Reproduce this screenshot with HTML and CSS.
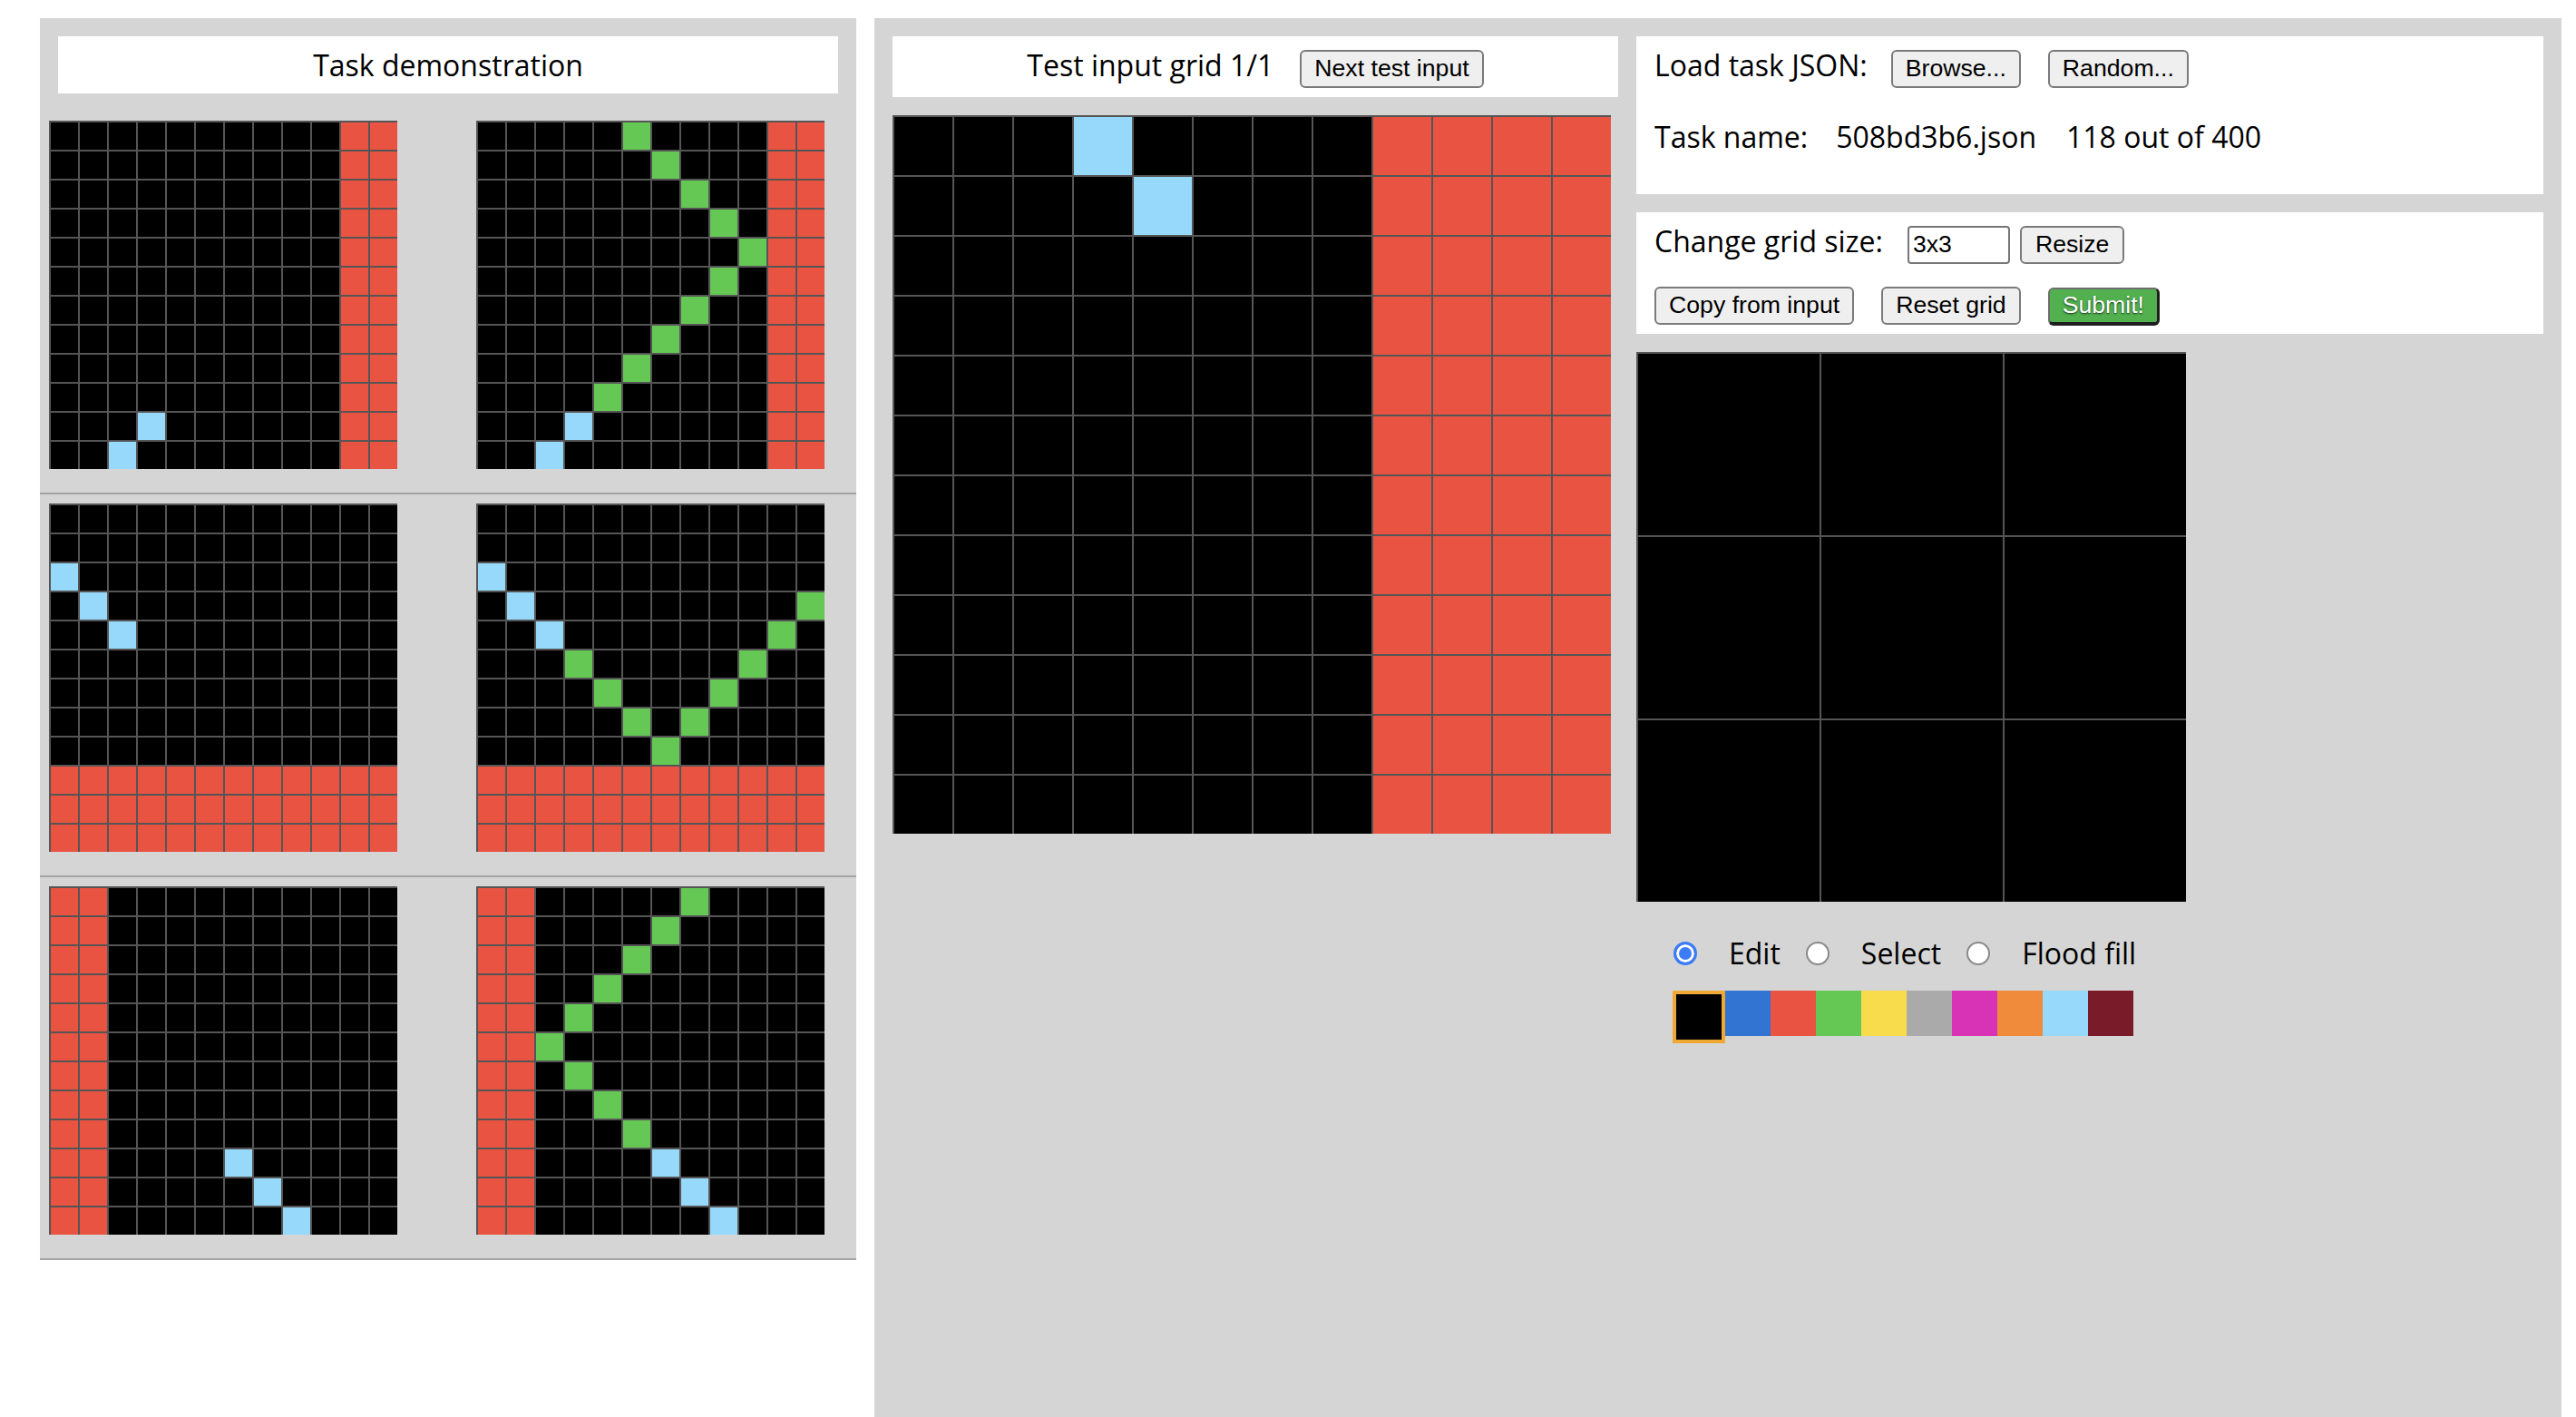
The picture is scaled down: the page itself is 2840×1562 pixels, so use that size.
FILE: index.html
```html
<!DOCTYPE html>
<html lang="en">
<head>
<meta charset="utf-8">
<title>ARC testing interface</title>
<link rel="stylesheet" href="styles.css">
</head>
<body>
<div class="workspace">
  <section class="demo-panel">
    <div class="demo-title">Task demonstration</div>
    <div class="pair">
      <div class="grid g12 demo-grid" data-rows="000000000022,000000000022,000000000022,000000000022,000000000022,000000000022,000000000022,000000000022,000000000022,000000000022,000800000022,008000000022"></div>
      <div class="grid g12 demo-grid" data-rows="000003000022,000000300022,000000030022,000000003022,000000000322,000000003022,000000030022,000000300022,000003000022,000030000022,000800000022,008000000022"></div>
    </div>
    <div class="pair">
      <div class="grid g12 demo-grid" data-rows="000000000000,000000000000,800000000000,080000000000,008000000000,000000000000,000000000000,000000000000,000000000000,222222222222,222222222222,222222222222"></div>
      <div class="grid g12 demo-grid" data-rows="000000000000,000000000000,800000000000,080000000003,008000000030,000300000300,000030003000,000003030000,000000300000,222222222222,222222222222,222222222222"></div>
    </div>
    <div class="pair">
      <div class="grid g12 demo-grid" data-rows="220000000000,220000000000,220000000000,220000000000,220000000000,220000000000,220000000000,220000000000,220000000000,220000800000,220000080000,220000008000"></div>
      <div class="grid g12 demo-grid" data-rows="220000030000,220000300000,220003000000,220030000000,220300000000,223000000000,220300000000,220030000000,220003000000,220000800000,220000080000,220000008000"></div>
    </div>
  </section>

  <section class="eval-area">
    <div class="test-col">
      <div class="test-title">
        <span class="label">Test input grid 1/1</span>
        <button class="btn btn-next">Next test input</button>
      </div>
      <div class="grid g12 test-grid" data-rows="000800002222,000080002222,000000002222,000000002222,000000002222,000000002222,000000002222,000000002222,000000002222,000000002222,000000002222,000000002222"></div>
    </div>

    <div class="control-col">
      <div class="box box-load">
        <div class="row">
          <span class="label">Load task JSON:</span>
          <button class="btn btn-browse">Browse...</button>
          <button class="btn btn-random">Random...</button>
        </div>
        <div class="row row-name">
          <span class="label">Task name:</span>
          <span class="label task-file">508bd3b6.json</span>
          <span class="label task-count">118 out of 400</span>
        </div>
      </div>

      <div class="box box-edit">
        <div class="row">
          <span class="label">Change grid size:</span>
          <input class="size-input" type="text" value="3x3">
          <button class="btn btn-resize">Resize</button>
        </div>
        <div class="row row-actions">
          <button class="btn">Copy from input</button>
          <button class="btn btn-gap">Reset grid</button>
          <button class="btn btn-gap btn-submit">Submit!</button>
        </div>
      </div>

      <div class="grid g3 output-grid" data-rows="000,000,000"></div>

      <div class="tools">
        <input class="radio" type="radio" name="tool" id="tool_edit" checked>
        <label class="tool-label" for="tool_edit">Edit</label>
        <input class="radio" type="radio" name="tool" id="tool_select">
        <label class="tool-label" for="tool_select">Select</label>
        <input class="radio" type="radio" name="tool" id="tool_fill">
        <label class="tool-label" for="tool_fill">Flood fill</label>
      </div>

      <div class="palette">
        <div class="swatch c0 selected"></div>
        <div class="swatch c1"></div>
        <div class="swatch c2"></div>
        <div class="swatch c3"></div>
        <div class="swatch c4"></div>
        <div class="swatch c5"></div>
        <div class="swatch c6"></div>
        <div class="swatch c7"></div>
        <div class="swatch c8"></div>
        <div class="swatch c9"></div>
      </div>
    </div>
  </section>
</div>
<script src="script.js"></script>
</body>
</html>
```

FILE: styles.css
```css
html, body {
  margin: 0;
  padding: 0;
  background: #ffffff;
  font-family: "Open Sans", "Liberation Sans", sans-serif;
  color: #000;
}

.workspace {
  display: flex;
  align-items: flex-start;
  padding: 20px 0 0 44px;
  height: 100vh;
  box-sizing: border-box;
}

/* ---------- left: demonstration ---------- */
.demo-panel {
  width: 900px;
  flex: none;
  background: #d5d5d5;
  padding-top: 20px;
}

.demo-title {
  height: 63px;
  box-sizing: border-box;
  margin: 0 20px;
  padding-top: 10px;
  background: #fff;
  text-align: center;
  font-size: 32px;
}

.pair {
  display: flex;
  gap: 87px;
  padding: 10px 0 26px 10px;
  border-bottom: 2px solid #a4a4a4;
}

.pair:first-of-type,
.demo-title + .pair {
  margin-top: 20px;
}

/* ---------- grids ---------- */
.grid {
  display: grid;
  flex: none;
}

.g12 {
  grid-template-columns: repeat(12, 1fr);
  grid-template-rows: repeat(12, 1fr);
}

.g3 {
  grid-template-columns: repeat(3, 1fr);
  grid-template-rows: repeat(3, 1fr);
}

.demo-grid {
  width: 384px;
  height: 384px;
}

.test-grid {
  width: 792px;
  height: 792px;
  margin-top: 20px;
}

.output-grid {
  width: 606px;
  height: 606px;
  margin-top: 20px;
}

.cell {
  box-sizing: border-box;
  border-top: 2px solid #555;
  border-left: 2px solid #555;
}

.c0 { background: #000000; }
.c1 { background: #3274d2; }
.c2 { background: #e95342; }
.c3 { background: #65c855; }
.c4 { background: #f9dc4b; }
.c5 { background: #aaaaaa; }
.c6 { background: #d833b6; }
.c7 { background: #ef8b3b; }
.c8 { background: #96d9fa; }
.c9 { background: #7a1b2a; }

/* ---------- right: evaluation area ---------- */
.eval-area {
  flex: none;
  width: 1860px;
  height: calc(100vh - 20px);
  margin-left: 20px;
  box-sizing: border-box;
  background: #d5d5d5;
  padding: 20px;
  display: flex;
  align-items: flex-start;
  gap: 20px;
}

.test-col {
  width: 800px;
  flex: none;
}

.test-title {
  height: 67px;
  box-sizing: border-box;
  padding-top: 10px;
  background: #fff;
  display: flex;
  align-items: baseline;
  justify-content: center;
  gap: 29px;
}

.label {
  font-size: 32px;
  white-space: nowrap;
}

.control-col {
  width: 1000px;
  flex: none;
}

.box {
  background: #fff;
  box-sizing: border-box;
  padding: 10px 20px 0 20px;
}

.box-load {
  height: 174px;
}

.box-edit {
  height: 134px;
  margin-top: 20px;
}

.row {
  display: flex;
  align-items: baseline;
}

.row-name {
  margin-top: 32px;
}

.task-file {
  margin-left: 31px;
}

.task-count {
  margin-left: 33px;
}

.row-actions {
  margin-top: 25px;
}

/* ---------- buttons / inputs ---------- */
.btn {
  height: 42px;
  box-sizing: border-box;
  padding: 0 14px;
  margin: 0;
  border: 2px solid #7a7a7a;
  border-radius: 6px;
  background: #efefef;
  color: #000;
  font-family: "Liberation Sans", Arial, sans-serif;
  font-size: 26.67px;
  white-space: nowrap;
}

.btn-browse {
  margin-left: 26px;
}

.btn-random {
  margin-left: 30px;
}

.btn-resize {
  margin-left: 11px;
  padding: 0 15px;
}

.btn-gap {
  margin-left: 30px;
}

.btn-submit {
  background: #52b04f;
  color: #fff;
  border-width: 2px 3px 4px 2px;
  border-color: #6e6e6e #1e1e1e #1e1e1e #6e6e6e;
  text-shadow: 0 1px 2px rgba(0, 0, 0, 0.75);
}

.size-input {
  width: 113px;
  height: 42px;
  box-sizing: border-box;
  margin: 0 0 0 27px;
  padding: 0 4px;
  border: 2px solid #767676;
  border-radius: 4px;
  background: #fff;
  color: #000;
  font-family: "Liberation Sans", Arial, sans-serif;
  font-size: 26.67px;
}

/* ---------- tools ---------- */
.tools {
  display: flex;
  align-items: center;
  margin: 35px 0 0 41px;
}

.radio {
  -webkit-appearance: none;
  appearance: none;
  width: 26px;
  height: 26px;
  margin: 0;
  box-sizing: border-box;
  border: 2px solid #8a8a8a;
  border-radius: 50%;
  background: #fff;
  flex: none;
}

.radio:checked {
  border: 3px solid #3b7cf4;
  background: #3b7cf4;
  box-shadow: inset 0 0 0 3px #fff;
}

.tool-label {
  font-size: 32px;
  margin: 0 28px 0 35px;
  white-space: nowrap;
}

.palette {
  display: flex;
  align-items: flex-start;
  margin: 20px 0 0 40px;
}

.swatch {
  width: 50px;
  height: 50px;
  flex: none;
}

.swatch.selected {
  border: 4px solid #f0a834;
}
```

FILE: script.js
```js
document.querySelectorAll('.grid[data-rows]').forEach(function (grid) {
  grid.getAttribute('data-rows').split(',').forEach(function (row) {
    for (var i = 0; i < row.length; i++) {
      var cell = document.createElement('div');
      cell.className = 'cell c' + row.charAt(i);
      grid.appendChild(cell);
    }
  });
});
```
